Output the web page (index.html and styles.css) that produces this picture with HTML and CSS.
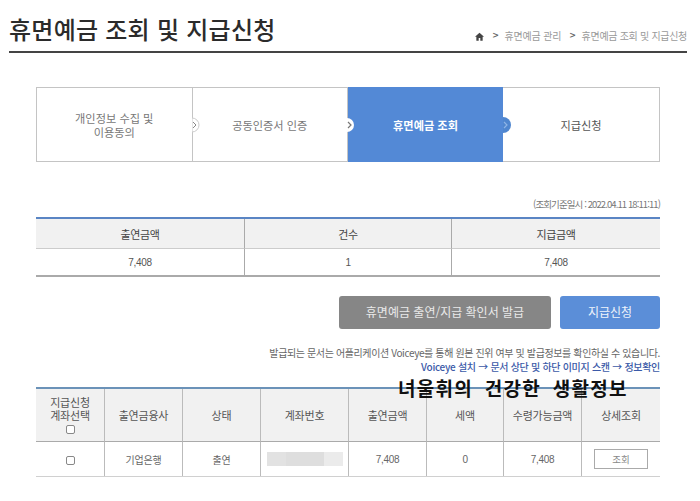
FILE: index.html
```html
<!DOCTYPE html>
<html lang="ko">
<head>
<meta charset="utf-8">
<title>휴면예금 조회 및 지급신청</title>
<link rel="stylesheet" href="styles.css">
</head>
<body>
<div class="page">
  <header class="head">
    <h1>휴면예금 조회 및 지급신청</h1>
    <nav class="crumbs">
      <svg class="home" width="9" height="9" viewBox="0 0 10 10"><path d="M5 .8 0 5.4h1.5V9.6h2.6V6.6h1.8v3h2.6V5.4H10z" fill="#444"/></svg>
      <span class="sep">&gt;</span><span class="crumb-a">휴면예금 관리</span>
      <span class="sep sep2">&gt;</span><span>휴면예금 조회 및 지급신청</span>
    </nav>
  </header>

  <ol class="steps">
    <li class="step">개인정보 수집 및<br>이용동의<span class="chev"><svg width="12" height="16" viewBox="0 0 12 16"><path d="M0 1a7 7 0 0 1 0 14z" fill="#fff" stroke="#ccc"/><path d="M1 5l3 3-3 3" fill="none" stroke="#888" stroke-width="1"/></svg></span></li>
    <li class="step">공동인증서 인증<span class="chev"><svg width="12" height="16" viewBox="0 0 12 16"><path d="M0 1a7 7 0 0 1 0 14z" fill="#fff"/><path d="M1 5l3 3-3 3" fill="none" stroke="#777" stroke-width="1.2"/></svg></span></li>
    <li class="step active">휴면예금 조회<span class="chev"><svg width="12" height="16" viewBox="0 0 12 16"><path d="M0 0a8 8 0 0 1 0 16z" fill="#4f86cf"/><path d="M1 5l3 3-3 3" fill="none" stroke="#8fb4e6" stroke-width="1.2"/></svg></span></li>
    <li class="step last">지급신청</li>
  </ol>

  <p class="basis">(조회기준일시 : 2022.04.11 18:11:11)</p>

  <div class="summary">
    <div class="cell th">출연금액</div><div class="cell th">건수</div><div class="cell th">지급금액</div>
    <div class="cell">7,408</div><div class="cell">1</div><div class="cell">7,408</div>
  </div>

  <div class="actions">
    <button class="btn grey">휴면예금 출연/지급 확인서 발급</button>
    <button class="btn blue">지급신청</button>
  </div>

  <p class="note">발급되는 문서는 어플리케이션 Voiceye를 통해 원본 진위 여부 및 발급정보를 확인하실 수 있습니다.</p>
  <p class="note strong">Voiceye 설치 → 문서 상단 및 하단 이미지 스캔 → 정보확인</p>

  <div class="list">
    <div class="c h">지급신청<br>계좌선택<span class="box"></span></div>
    <div class="c h">출연금융사</div>
    <div class="c h">상태</div>
    <div class="c h">계좌번호</div>
    <div class="c h">출연금액</div>
    <div class="c h">세액</div>
    <div class="c h">수령가능금액</div>
    <div class="c h">상세조회</div>
    <div class="c"><span class="box"></span></div>
    <div class="c">기업은행</div>
    <div class="c">출연</div>
    <div class="c"><span class="mask"></span></div>
    <div class="c num">7,408</div>
    <div class="c num">0</div>
    <div class="c num">7,408</div>
    <div class="c"><button class="view">조회</button></div>
  </div>

  <div class="mark">녀울휘의 건강한 생활정보</div>
</div>
</body>
</html>
```

FILE: styles.css
```css
* { box-sizing: border-box; }
html, body { margin: 0; padding: 0; background: #fff; }
body { font-family: "Noto Sans CJK KR", "Noto Sans", sans-serif; color: #555; }
.page { position: relative; width: 700px; height: 501px; overflow: hidden; padding-left: 36px; }

.head { display: flex; justify-content: space-between; align-items: flex-end; width: 678px; height: 53px; margin-left: -27px; border-bottom: 2px solid #444; padding-bottom: 4px; }
h1 { margin: 0; font-size: 24px; line-height: 36px; font-weight: 500; color: #2b2b2b; letter-spacing: .25px; }
.crumbs { display: flex; align-items: center; font-size: 10px; line-height: 14px; color: #9a9a9a; letter-spacing: -.3px; margin-bottom: 4px; }
.crumb-a { letter-spacing: -.2px; }
.home { margin-right: 8px; }
.sep { font-family: "DejaVu Sans", sans-serif; font-size: 8px; font-weight: 700; color: #666; margin-right: 6px; }
.sep2 { margin-left: 8px; }

.steps { list-style: none; display: flex; width: 624px; height: 75px; margin: 34px 0 0; padding: 0; border: 1px solid #c4c4c4; }
.step { position: relative; flex: 0 0 155.5px; display: flex; align-items: center; justify-content: center; text-align: center; font-size: 11.2px; line-height: 14px; color: #777; border-right: 1px solid #c4c4c4; }
.step.active { flex-basis: 155px; background: #5389d6; color: #fff; font-weight: 700; border-right: 0; margin: -1px 0; height: 75px; }
.step.last { border-right: 0; color: #555; flex: 1; }
.chev { position: absolute; right: -12px; top: 50%; margin-top: -8px; height: 16px; display: block; z-index: 1; }
.chev svg { display: block; }

.basis { margin: 35px 0 0; width: 624px; text-align: right; font-size: 9.5px; line-height: 14px; color: #777; letter-spacing: -.9px; }

.summary { display: grid; grid-template-columns: 209px 207px 208px; width: 624px; margin-top: 6px; border-top: 2px solid #5a85c4; border-bottom: 2px solid #aaa; }
.cell { display: flex; align-items: center; justify-content: center; height: 26px; font-family: "Liberation Sans", sans-serif; font-size: 10px; color: #555; letter-spacing: -.35px; border-right: 1px solid #aaa; }
.cell:nth-child(3n) { border-right: 0; }
.cell.th { height: 30px; background: #f1f1f1; border-bottom: 1px solid #ccc; font-family: "Noto Sans CJK KR", sans-serif; font-size: 11px; color: #444; }

.actions { display: flex; justify-content: flex-end; gap: 9px; width: 624px; margin-top: 19px; }
.btn { height: 33px; border: 0; border-radius: 3px; color: #fff; font-family: inherit; font-size: 12px; line-height: 31px; padding: 0 0 2px; opacity: .95; }
.btn.grey { width: 212px; background: #808080; color: #e8e8e8; }
.btn.blue { width: 100px; background: #5389d6; color: #eef4fc; }

.note { margin: 17px 0 0; width: 624px; text-align: right; font-size: 10px; line-height: 14px; color: #666; letter-spacing: -.38px; }
.note.strong { margin-top: 0; color: #3b5aa8; font-weight: 500; letter-spacing: -.3px; }

.list { display: grid; grid-template-columns: 69px 78px 78px 88px 78px 77px 78px 78px; grid-template-rows: 53px 34px; width: 624px; margin-top: 13px; border-top: 2px solid #6b92b8; border-bottom: 1px solid #d0d0d0; }
.c { display: flex; flex-direction: column; align-items: center; justify-content: center; text-align: center; font-size: 10px; color: #666; letter-spacing: -.2px; border-right: 1px solid #bbb; }
.c:nth-child(8n) { border-right: 0; }
.c.h { background: #f1f1f1; border-bottom: 1px solid #aaa; font-size: 11px; line-height: 13px; color: #555; }
.c.num { font-family: "Liberation Sans", sans-serif; letter-spacing: -.35px; }
.box { display: block; width: 9px; height: 9px; margin-top: 3px; border: 1px solid #888; border-radius: 2px; background: #fff; }
.mask { display: block; width: 76px; height: 14px; background: linear-gradient(90deg, #e2e2e2 0 25%, #dedede 25% 75%, #ebebeb 75%); }
.view { width: 54px; height: 20px; padding: 0; background: #fff; border: 1px solid #aaa; font-family: inherit; font-size: 9.5px; color: #888; }

.mark { position: absolute; left: 398px; top: 375px; font-size: 19px; line-height: 26px; font-weight: 700; color: #111; letter-spacing: 1.3px; word-spacing: 5px; white-space: nowrap; }
```
